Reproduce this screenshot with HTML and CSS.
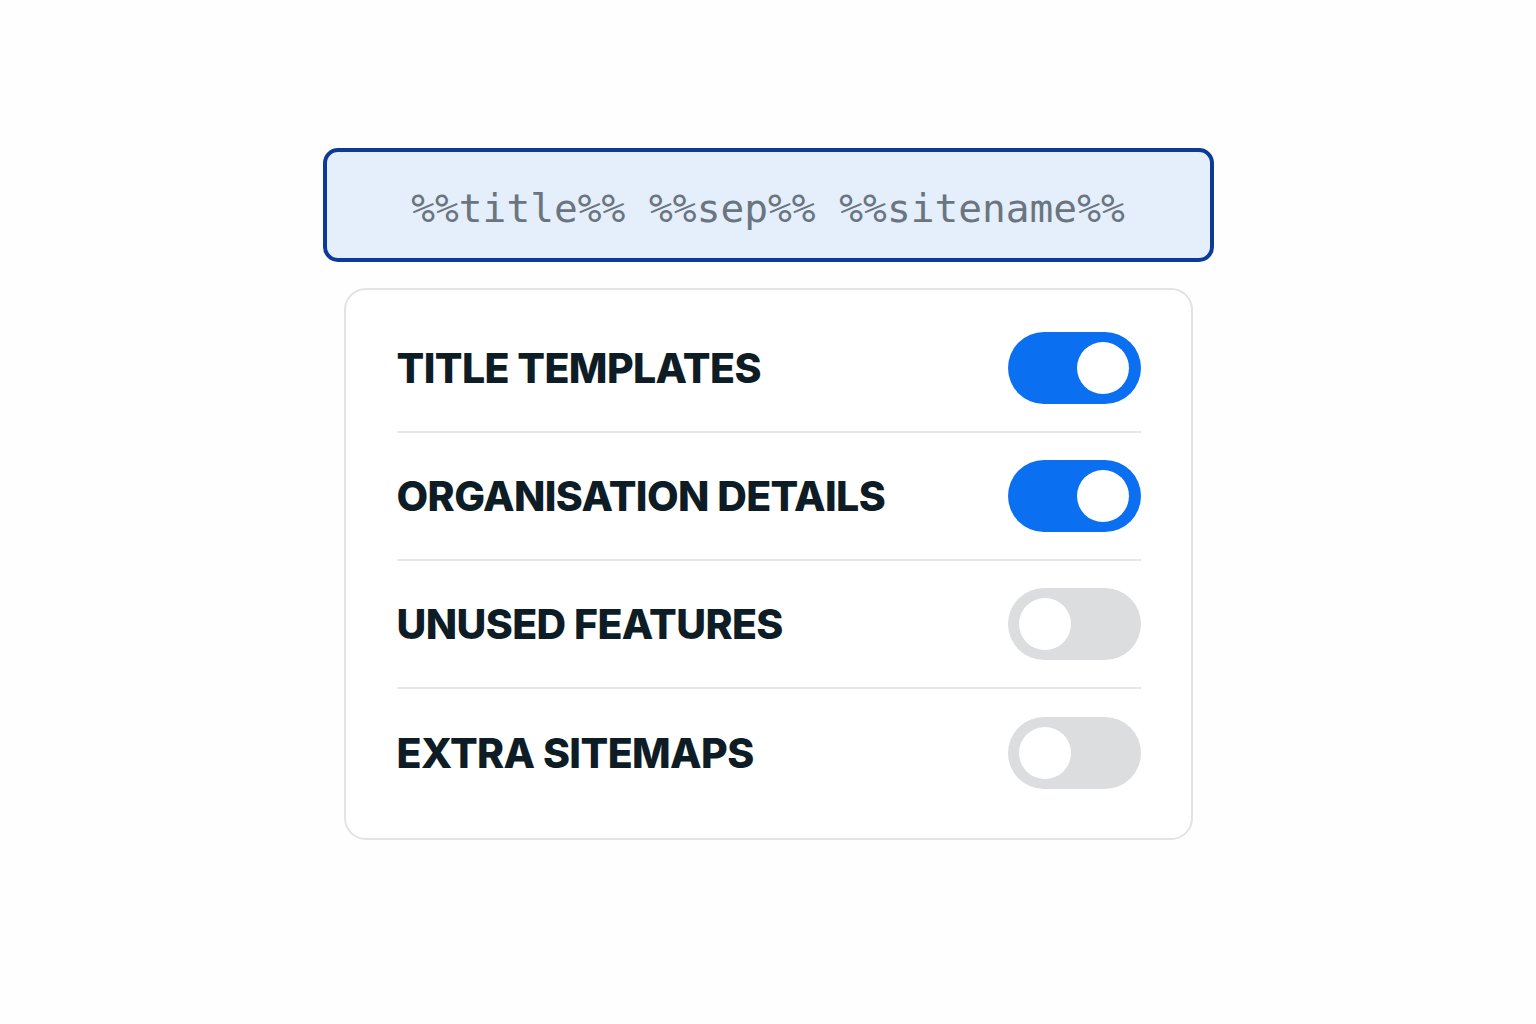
FILE: index.html
```html
<!doctype html>
<html>

<head>
    <title>SEO settings</title>
    <link rel="stylesheet" href="styles.css">
</head>

<body>
    <div class="app">
        <div class="template-field">%%title%% %%sep%% %%sitename%%</div>

        <div class="settings">
            <div class="row">
                <span class="label">TITLE TEMPLATES</span>
                <span class="toggle on"><span class="knob"></span></span>
            </div>
            <div class="row">
                <span class="label">ORGANISATION DETAILS</span>
                <span class="toggle on"><span class="knob"></span></span>
            </div>
            <div class="row">
                <span class="label">UNUSED FEATURES</span>
                <span class="toggle"><span class="knob"></span></span>
            </div>
            <div class="row">
                <span class="label">EXTRA SITEMAPS</span>
                <span class="toggle"><span class="knob"></span></span>
            </div>
        </div>
    </div>
</body>

</html>
```

FILE: styles.css
```css
html,
body {
    margin: 0;
    padding: 0;
    width: 100%;
    height: 100%;
    background: #fefefe;
}

* {
    box-sizing: border-box;
}

.app {
    display: flex;
    flex-direction: column;
    align-items: center;
    gap: 26px;
    padding-top: 148px;
}

.template-field {
    width: 891px;
    height: 114px;
    border: 4px solid #0c3a98;
    border-radius: 15px;
    background: #e5eefb;
    padding-top: 5px;

    display: flex;
    align-items: center;
    justify-content: center;

    font-family: "DejaVu Sans Mono", "Liberation Mono", monospace;
    font-size: 39.5px;
    color: #6a7580;
    white-space: pre;
}

.settings {
    width: 849px;
    border: 2px solid #e2e3e4;
    border-radius: 22px;
    background: #fff;
    padding: 15px 50px 21px 51px;
}

.row {
    display: flex;
    align-items: center;
    justify-content: space-between;
    height: 128px;
    border-bottom: 2px solid #e7e8e9;
}

.row:last-child {
    border-bottom: none;
}

.label {
    font-family: Inter, "Noto Sans", sans-serif;
    font-weight: 800;
    font-size: 41px;
    letter-spacing: -0.6px;
    color: #0e1c25;
}

.toggle {
    display: flex;
    align-items: center;
    width: 133px;
    height: 72px;
    border-radius: 36px;
    background: #dcdddf;
    padding: 0 11px;
}

.toggle.on {
    background: #0a6ff0;
    justify-content: flex-end;
    padding: 0 12px;
}

.knob {
    width: 52px;
    height: 52px;
    border-radius: 50%;
    background: #fff;
}
```
